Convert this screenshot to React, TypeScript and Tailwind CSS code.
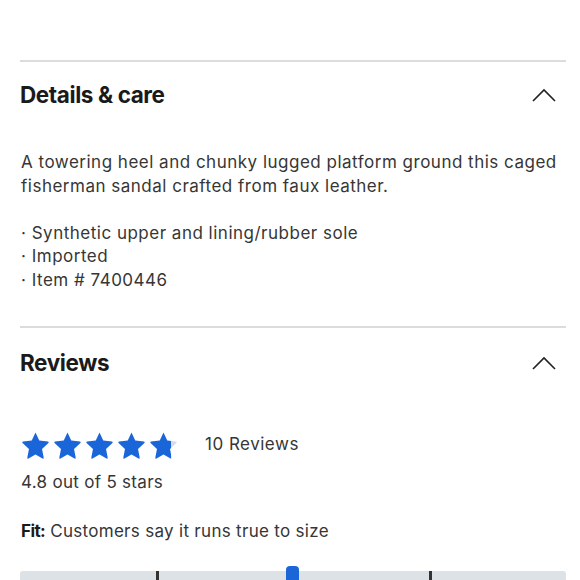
import React from "react";

function Chevron() {
  return (
    <svg width="24" height="14" viewBox="0 0 24 14" fill="none">
      <path d="M1 13L12 2l11 11" stroke="#222" strokeWidth="1.6" />
    </svg>
  );
}

function Star({ fill = 1, id }: { fill?: number; id: string }) {
  return (
    <svg width="29" height="28" viewBox="0 0 24 23">
      <defs>
        <linearGradient id={id}>
          <stop offset={`${fill * 100}%`} stopColor="#1a66d9" />
          <stop offset={`${fill * 100}%`} stopColor="#d8dde3" />
        </linearGradient>
      </defs>
      <path
        d="M12 1.2l3.1 6.6 7.2.9c.6.1.8.8.4 1.2l-5.3 5 1.4 7.1c.1.6-.5 1-1 .7L12 19.3l-5.8 3.4c-.5.3-1.1-.1-1-.7l1.4-7.1-5.3-5c-.4-.4-.2-1.1.4-1.2l7.2-.9L12 1.2z"
        fill={`url(#${id})`}
        strokeLinejoin="round"
      />
    </svg>
  );
}

function SectionHeader({ title, className = "" }: { title: string; className?: string }) {
  return (
    <div className={`flex items-center justify-between h-[66px] pr-[10px] ${className}`}>
      <h2 className="text-[22.5px] font-bold tracking-[-0.4px] text-[#1a1a1a]">{title}</h2>
      <Chevron />
    </div>
  );
}

export default function App() {
  return (
    <main
      className="w-[580px] h-[580px] overflow-hidden bg-white pl-5 pr-[14px] pt-[60px]"
      style={{ fontFamily: "Inter, 'Liberation Sans', sans-serif" }}
    >
      <section className="border-t-2 border-[#dcdcdc]">
        <SectionHeader title="Details & care" />
        <div className="mt-[23px] pl-px text-[17px] leading-[23.5px] tracking-[0.5px] text-[#363636]">
          <p>
            A towering heel and chunky lugged platform ground this caged
            fisherman sandal crafted from faux leather.
          </p>
          <p className="h-[23.5px]"></p>
          <ul>
            <li>· Synthetic upper and lining/rubber sole</li>
            <li>· Imported</li>
            <li>· Item # 7400446</li>
          </ul>
        </div>
      </section>

      <section className="mt-[34px] border-t-2 border-[#dcdcdc]">
        <SectionHeader title="Reviews" className="pt-[3px]" />
        <div className="mt-[37px] flex items-center pl-px">
          <div className="flex gap-[3px]">
            <Star id="s1" />
            <Star id="s2" />
            <Star id="s3" />
            <Star id="s4" />
            <Star id="s5" fill={0.8} />
          </div>
          <span className="ml-[27px] text-[17px] tracking-[0.5px] text-[#363636]">10 Reviews</span>
        </div>
        <p className="mt-[11px] pl-px text-[17px] leading-[24px] tracking-[0.3px] text-[#363636]">4.8 out of 5 stars</p>
        <p className="mt-[25px] pl-px text-[17px] leading-[24px] tracking-[0.3px] text-[#363636]">
          <span className="font-bold text-[#1a1a1a] tracking-[-0.6px]">Fit:</span> Customers say it runs true to size
        </p>
        <div className="relative mt-[23px] h-[20px]">
          <div className="absolute left-0 right-0 top-[5px] h-[15px] rounded-[3px] bg-[#dde2e6]" />
          <div className="absolute left-[136px] top-[5px] h-[15px] w-[3px] bg-[#333]" />
          <div className="absolute left-[409px] top-[5px] h-[15px] w-[3px] bg-[#333]" />
          <div className="absolute left-[266px] top-0 h-[20px] w-[13px] rounded-t-[4px] bg-[#1a66d9]" />
        </div>
      </section>
    </main>
  );
}
